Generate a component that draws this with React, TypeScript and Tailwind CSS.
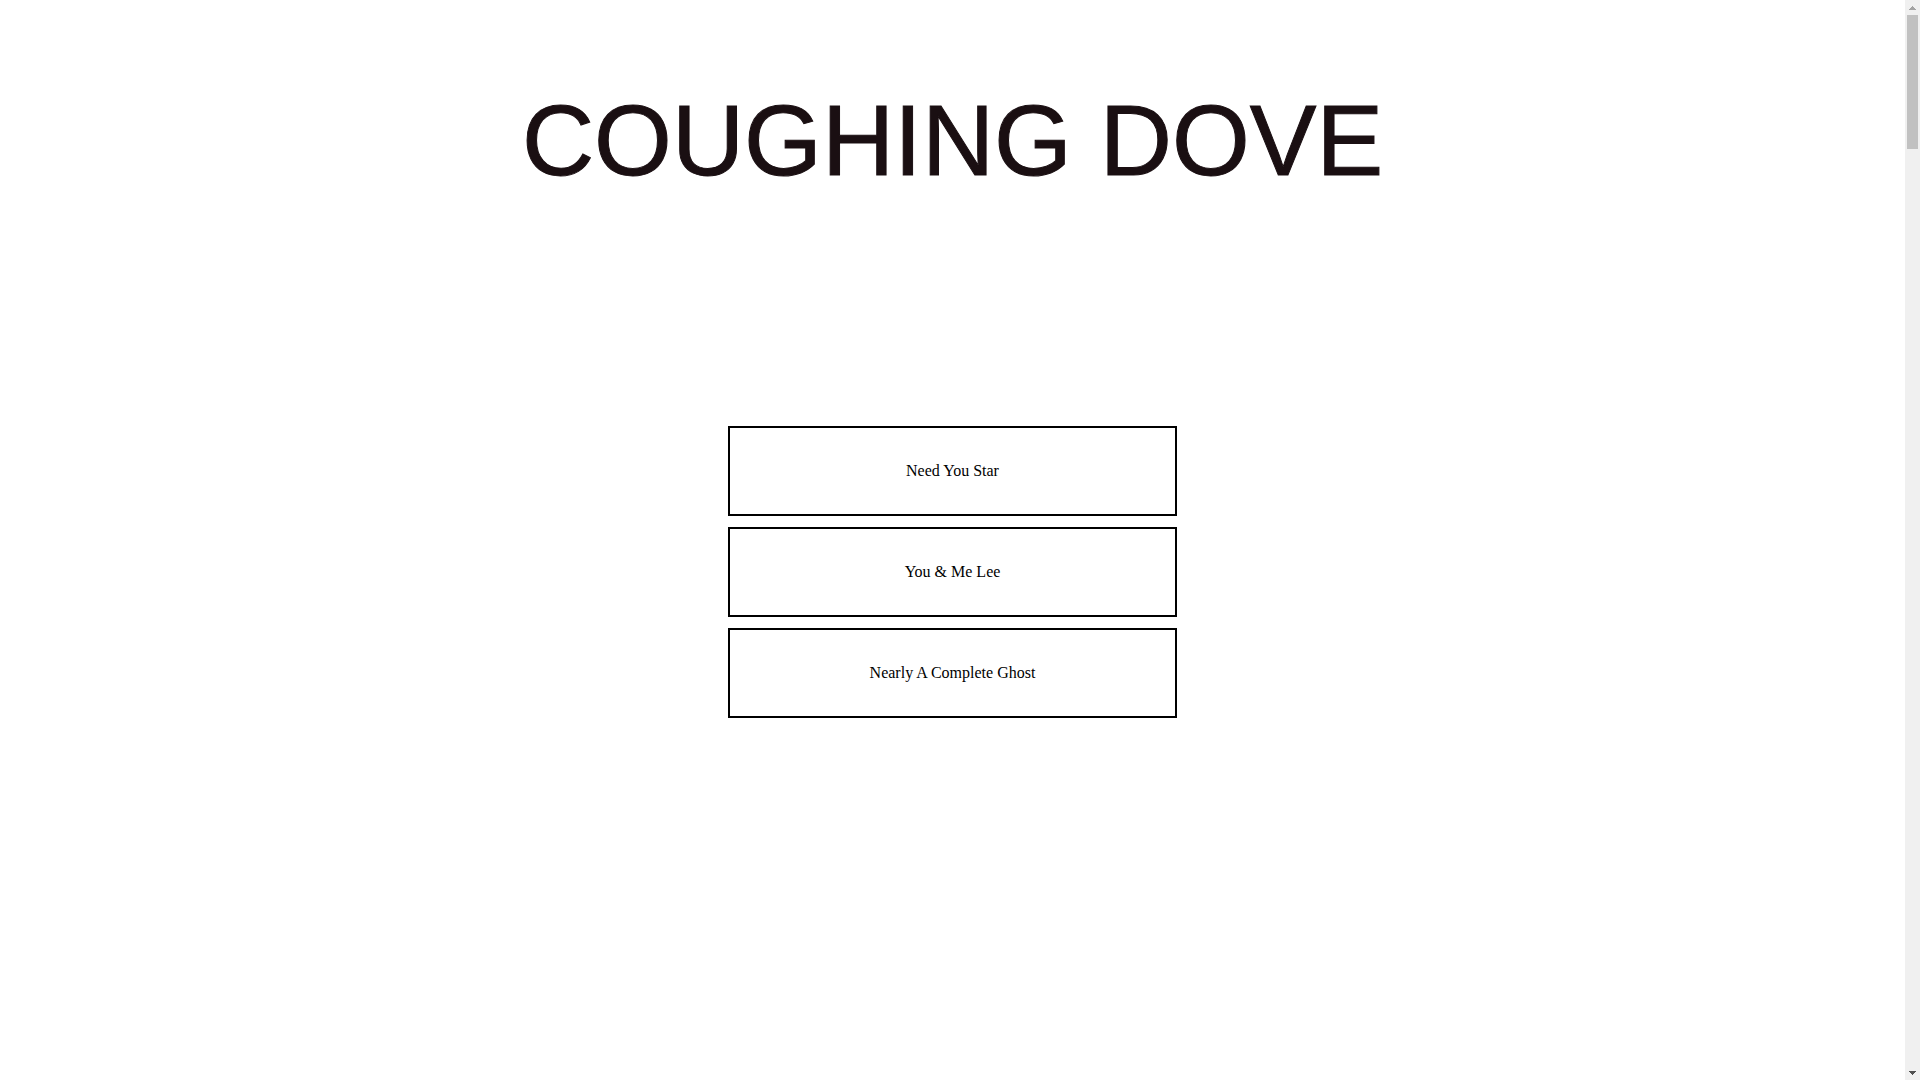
import React from 'react';

interface Release {
  title: string;
  href: string;
}

const releases: Release[] = [
  { title: 'Need You Star', href: '#need-you-star' },
  { title: 'You & Me Lee', href: '#you-and-me-lee' },
  { title: 'Nearly A Complete Ghost', href: '#nearly-a-complete-ghost' },
];

function ReleaseLink({ title, href }: Release) {
  return (
    <a
      href={href}
      className="flex items-center justify-center border-2 border-black px-6 py-8 text-base leading-[22px] text-black hover:bg-black hover:text-white"
    >
      {title}
    </a>
  );
}

function ScrollRail() {
  return (
    <div aria-hidden="true" className="sticky top-0 flex h-screen w-[15px] shrink-0 flex-col items-center bg-[#f0f0f0]">
      <div className="flex h-[15px] items-center justify-center">
        <svg width="7" height="4" viewBox="0 0 7 4" shapeRendering="crispEdges" fill="#a3a3a3">
          <path d="M3 0h1v1h1v1h1v1h1v1H0V3h1V2h1V1h1z" />
        </svg>
      </div>
      <div className="h-[134px] w-[11px] bg-[#c1c1c1]"></div>
      <div className="mt-auto flex h-[15px] items-center justify-center">
        <svg width="7" height="4" viewBox="0 0 7 4" shapeRendering="crispEdges" fill="#505050">
          <path d="M0 0h7v1H6v1H5v1H4v1H3V3H2V2H1V1H0z" />
        </svg>
      </div>
    </div>
  );
}

export default function App() {
  return (
    <div className="flex min-h-screen bg-white">
      <div className="min-w-0 flex-1">
        {/* Band name, with a thin outline for a little more weight */}
        <header className="px-6 pt-20 text-center">
          <h1 className="font-['Liberation_Sans',Arial,sans-serif] text-[100px] leading-[120px] text-[#1a0f12] [-webkit-text-stroke:1px_#1a0f12]">
            COUGHING DOVE
          </h1>
        </header>

        {/* Release links */}
        <main className="mt-[226px] flex justify-center px-6">
          <nav
            aria-label="Releases"
            className="flex w-full max-w-[449px] flex-col gap-[11px] font-['Liberation_Serif','Times_New_Roman',serif]"
          >
            {releases.map((release) => (
              <ReleaseLink key={release.href} {...release} />
            ))}
          </nav>
        </main>
      </div>

      <ScrollRail />
    </div>
  );
}
